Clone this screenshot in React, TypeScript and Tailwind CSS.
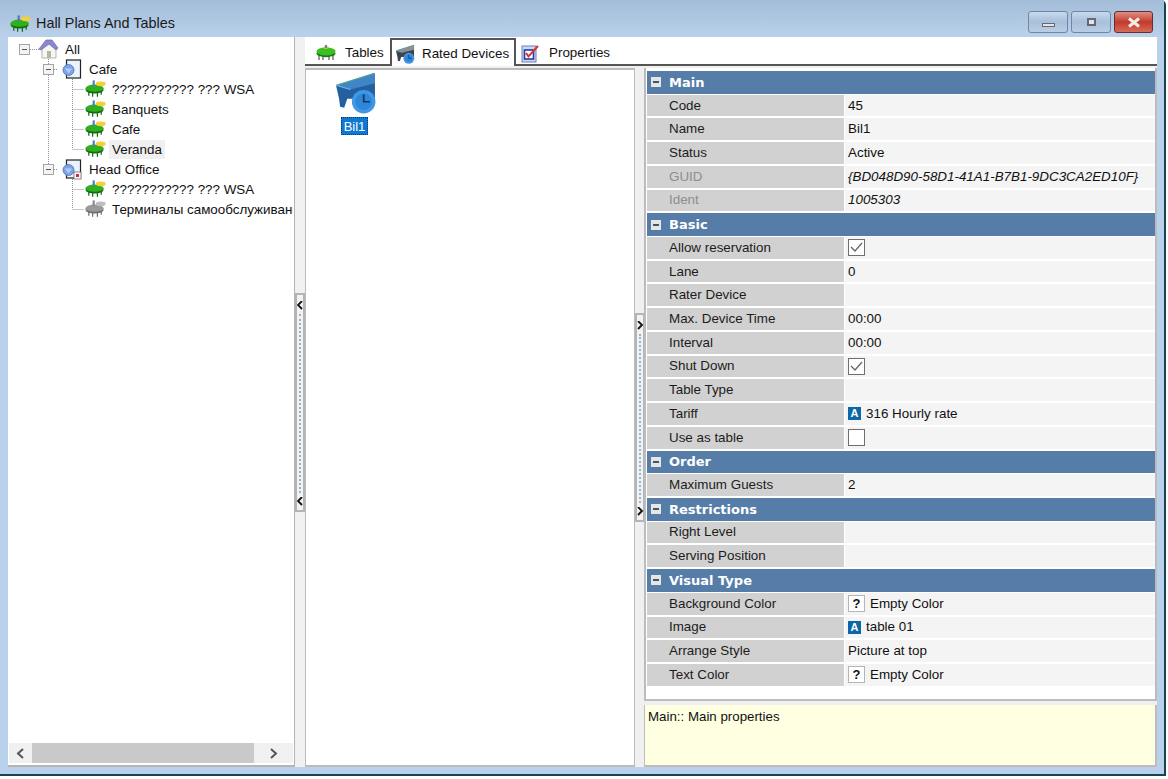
import React from "react";

function TableIcon({ gray = false }: { gray?: boolean }) {
  const top = gray ? "#9a9a9a" : "#2fb01f";
  const dark = gray ? "#6f6f6f" : "#146a12";
  const plate = gray ? "#bdbdbd" : "#f4cf3a";
  return (
    <svg width="21" height="18" viewBox="0 0 22 18" className="shrink-0">
      <path d="M4 10v6M8 11v6M13 11v6M17 10v5" stroke={dark} strokeWidth="1.3" />
      <ellipse cx="10" cy="10" rx="9.5" ry="3.6" fill={dark} />
      <ellipse cx="10" cy="8.2" rx="9.5" ry="3.8" fill={top} />
      <ellipse cx="16.5" cy="3.6" rx="5.2" ry="2.4" fill={plate} />
      <rect x="8" y="0" width="2.2" height="6" fill={gray ? "#8a8a8a" : "#4d78c0"} />
    </svg>
  );
}

function HouseIcon() {
  return (
    <svg width="22" height="20" viewBox="0 0 22 20" className="shrink-0">
      <path d="M4 9l7-5 7 5v10H4z" fill="#f7f6ef" stroke="#a3a3a3" strokeWidth=".8" />
      <path d="M1 10 8 1h6l6 8-2 2-7-6-8 6z" fill="#8a87d2" stroke="#6a67a5" strokeWidth=".7" />
      <rect x="9" y="12" width="4" height="7" fill="#b9b4a8" />
    </svg>
  );
}

function BranchIcon({ mark = false }: { mark?: boolean }) {
  return (
    <svg width="20" height="21" viewBox="0 0 20 21" className="shrink-0">
      <rect x="4.5" y="1" width="14" height="18" fill="#eaf3fb" stroke="#222" strokeWidth="1.2" />
      <circle cx="6.5" cy="11" r="5.5" fill="#7ea4e8" stroke="#4a6fbd" strokeWidth=".8" />
      <path d="M3 9.5h7l-3.5 5z" fill="#b5cdf5" />
      {mark && <rect x="12" y="13" width="7" height="7" fill="#fff" stroke="#555" strokeWidth=".7" />}
      {mark && <rect x="14" y="15" width="3" height="3" fill="#d02840" />}
    </svg>
  );
}

function Expander() {
  return (
    <span className="w-[11px] h-[11px] border border-[#a5a5a5] bg-[#f4f4f4] flex items-center justify-center shrink-0">
      <span className="w-[5px] h-px bg-[#555]" />
    </span>
  );
}

function TreeRow({ indent, label, icon, exp, hl }: { indent: string; label: string; icon: React.ReactNode; exp?: boolean; hl?: boolean }) {
  return (
    <div className={`h-5 flex items-center whitespace-nowrap ${indent}`}>
      {exp ? <span className="w-[19px] flex"><Expander /></span> : <span className="w-0" />}
      <span className="w-[24px] flex shrink-0">{icon}</span>
      <span className={`pl-[3px] pr-[3px] h-[19px] leading-[19px] ${hl ? "bg-[#f0f0f0]" : ""}`}>{label}</span>
    </div>
  );
}

function TreeLines() {
  const dash = { stroke: "#8f8f8f", strokeDasharray: "1 1" };
  return (
    <svg className="absolute left-0 top-0" width="100" height="190">
      <path d="M22 12.5h9M40.5 22v110" {...dash} fill="none" />
      <path d="M64.5 42v70M64.5 52.5h12M64.5 72.5h12M64.5 92.5h12M64.5 112.5h12M64.5 142v30M64.5 152.5h12M64.5 172.5h12M46 32.5h3M46 132.5h3" {...dash} fill="none" />
    </svg>
  );
}

function Splitter({ dir }: { dir: "l" | "r" }) {
  const ch = dir === "l" ? "M5 0 1 4l4 4" : "M1 0l4 4-4 4";
  const arrow = (
    <svg width="7" height="9" viewBox="0 0 7 9"><path d={ch} fill="none" stroke="#111" strokeWidth="1.8" /></svg>
  );
  return (
    <div className="w-[10px] flex items-center justify-center shrink-0">
      <div className={`w-[10px] border-2 border-[#b4b4b4] bg-[#f2f2f2] flex flex-col items-center justify-between pt-[6px] pb-[4px] ${dir === "l" ? "h-[219px]" : "h-[209px]"}`}>
        {arrow}
        <div className="flex-1 border-l-2 border-dotted border-[#8db4da] my-1" />
        {arrow}
      </div>
    </div>
  );
}

function TabTablesIcon() {
  return <svg width="20" height="16" viewBox="0 0 20 16" className="shrink-0"><path d="M3 9v6M7 10v5M13 10v5M17 9v6" stroke="#444" strokeWidth="1.1" /><ellipse cx="10" cy="8.4" rx="9.5" ry="3.8" fill="#137a12" /><ellipse cx="10" cy="6.4" rx="9.5" ry="4" fill="#3cc020" /><ellipse cx="10" cy="2.6" rx="3" ry="1.3" fill="#d6c04a" /><rect x="9" y="0" width="2" height="3" fill="#5f7fb5" /></svg>;
}

function DeviceIcon({ size, dark = false }: { size: number; dark?: boolean }) {
  const body = dark ? "#3f444c" : "#24609f";
  const top = dark ? "#8a8f98" : "#3f86c8";
  return (
    <svg width={size} height={size} viewBox="0 0 40 40" className="shrink-0">
      <path d="M0 12 38 0v26l-10 2-8-3-9 0-3 9-4-1-1-8z" fill={body} />
      <path d="M0 12 38 0v10L14 16z" fill={top} />
      <path d="M0 12 38 0" stroke="#5fae8c" strokeWidth="1" />
      <path d="M0 12l14 4" stroke="#7ab6e2" strokeWidth="1" />
      <circle cx="27" cy="28" r="11.5" fill="#3f97e6" />
      <circle cx="27" cy="28" r="8" fill="#2f86d6" />
      <path d="M27 21v7h6" stroke="#0f3560" strokeWidth="1.6" fill="none" />
    </svg>
  );
}

function PropsIcon() {
  return <svg width="18" height="19" viewBox="0 0 18 19" className="shrink-0"><rect x="1" y="2" width="14" height="16" fill="#cfd6ef" stroke="#6f7fc0" /><rect x="3.5" y="6" width="9" height="9" fill="#fff" stroke="#1c3fa8" strokeWidth="1.6" /><path d="M5 9l2.5 3.5L17 2" fill="none" stroke="#d8322a" strokeWidth="2" /></svg>;
}

function AIcon() {
  return <span className="w-[13px] h-[13px] bg-[#0d66a8] text-white text-[11px] leading-[13px] text-center font-bold shrink-0 mr-[5px]">A</span>;
}
function QIcon() {
  return <span className="w-[17px] h-[17px] border border-[#b5b5b5] bg-white text-[#111] text-[13px] leading-[15px] text-center font-bold shrink-0 mr-[5px]">?</span>;
}
function Check({ on }: { on: boolean }) {
  return (
    <span className="w-[17px] h-[17px] border border-[#6f6f6f] bg-white shrink-0 flex items-center justify-center">
      {on && <svg width="13" height="11" viewBox="0 0 13 11"><path d="M1 5l4 4 7-8" fill="none" stroke="#666" strokeWidth="1.3" /></svg>}
    </span>
  );
}

type Row = { h?: string; l?: string; v?: React.ReactNode; dim?: boolean };
const rows: Row[] = [
  { h: "Main" },
  { l: "Code", v: "45" },
  { l: "Name", v: "Bil1" },
  { l: "Status", v: "Active" },
  { l: "GUID", v: <i className="whitespace-nowrap">{"{BD048D90-58D1-41A1-B7B1-9DC3CA2ED10F}"}</i>, dim: true },
  { l: "Ident", v: <i>1005303</i>, dim: true },
  { h: "Basic" },
  { l: "Allow reservation", v: <Check on /> },
  { l: "Lane", v: "0" },
  { l: "Rater Device" },
  { l: "Max. Device Time", v: "00:00" },
  { l: "Interval", v: "00:00" },
  { l: "Shut Down", v: <Check on /> },
  { l: "Table Type" },
  { l: "Tariff", v: <><AIcon />316 Hourly rate</> },
  { l: "Use as table", v: <Check on={false} /> },
  { h: "Order" },
  { l: "Maximum Guests", v: "2" },
  { h: "Restrictions" },
  { l: "Right Level" },
  { l: "Serving Position" },
  { h: "Visual Type" },
  { l: "Background Color", v: <><QIcon />Empty Color</> },
  { l: "Image", v: <><AIcon />table 01</> },
  { l: "Arrange Style", v: "Picture at top" },
  { l: "Text Color", v: <><QIcon />Empty Color</> },
];

function GridRow({ r }: { r: Row }) {
  if (r.h) {
    return (
      <div className="h-[23.72px] pb-[1px] shrink-0">
        <div className="h-full bg-[#567ca8] flex items-center pl-[4px] text-white font-bold text-[13px]" style={{ fontFamily: '"DejaVu Sans", sans-serif' }}>
          <span className="w-[10px] h-[10px] bg-[#e6e6e6] flex items-center justify-center mr-[8px]"><span className="w-[6px] h-[2px] bg-[#456]" /></span>
          {r.h}
        </div>
      </div>
    );
  }
  return (
    <div className="h-[23.72px] pb-[2px] shrink-0 flex">
      <div className={`w-[197px] bg-[#d1d1d1] pl-[22px] flex items-center ${r.dim ? "text-[#8e8e8e]" : "text-[#1c1c1c]"}`}>{r.l}</div>
      <div className="flex-1 ml-px bg-[#f4f4f4] pl-[3px] flex items-center text-[#111]">{r.v}</div>
    </div>
  );
}

export default function App() {
  return (
    <div className="w-[1168px] h-[779px] bg-white overflow-hidden text-[13.4px] text-[#111]" style={{ fontFamily: '"Liberation Sans", Arial, sans-serif' }}>
      <div className="w-[1166px] h-[776px] border-r-2 border-b-2 border-[#17454f] bg-[#b9d1ea] flex flex-col rounded-tr-[5px]">
        <div className="h-[37px] shrink-0 flex items-start bg-gradient-to-b from-[#a3bcd8] to-[#b9d1ea] pl-[10px] pr-[11px]">
          <div className="flex items-center mt-[13px]">
            <TableIcon />
            <span className="ml-[5px] text-[14.4px] text-[#1a1a1a]">Hall Plans And Tables</span>
          </div>
          <div className="ml-auto flex gap-[3px] mt-[11px]">
            <div className="w-[40px] h-[22px] rounded-[3px] border border-[#6f87a3] bg-gradient-to-b from-[#c7d9ec] via-[#a8c0da] to-[#b9cee4] flex items-end justify-center pb-[5px]">
              <span className="w-[13px] h-[4px] bg-[#e4e4e4] border border-[#667]" />
            </div>
            <div className="w-[40px] h-[22px] rounded-[3px] border border-[#6f87a3] bg-gradient-to-b from-[#c7d9ec] via-[#a8c0da] to-[#b9cee4] flex items-center justify-center">
              <span className="w-[9px] h-[8px] bg-[#e4e4e4] border-2 border-[#667]" />
            </div>
            <div className="w-[39px] h-[22px] rounded-[3px] border border-[#6a2b33] bg-gradient-to-b from-[#dc8f80] via-[#c2392b] to-[#d66a58] flex items-center justify-center">
              <svg width="14" height="11" viewBox="0 0 14 11"><path d="M2 1.5l10 8M12 1.5l-10 8" stroke="#f3ebe6" strokeWidth="3" /></svg>
            </div>
          </div>
        </div>

        <div className="mx-[8px] h-[730px] w-[1149px] flex bg-[#f0f0f0]">
          <div className="w-[287px] shrink-0 bg-white border-b-2 border-r border-[#b4b4b4] flex flex-col relative">
            <TreeLines />
            <div className="flex-1 pt-[2px] relative">
              <TreeRow indent="pl-[11px]" exp label="All" icon={<HouseIcon />} />
              <TreeRow indent="pl-[35px]" exp label="Cafe" icon={<BranchIcon />} />
              <TreeRow indent="pl-[77px]" label="??????????? ??? WSA" icon={<TableIcon />} />
              <TreeRow indent="pl-[77px]" label="Banquets" icon={<TableIcon />} />
              <TreeRow indent="pl-[77px]" label="Cafe" icon={<TableIcon />} />
              <TreeRow indent="pl-[77px]" hl label="Veranda" icon={<TableIcon />} />
              <TreeRow indent="pl-[35px]" exp label="Head Office" icon={<BranchIcon mark />} />
              <TreeRow indent="pl-[77px]" label="??????????? ??? WSA" icon={<TableIcon />} />
              <div className="overflow-hidden w-[285px]">
                <TreeRow indent="pl-[77px]" label="Терминалы самообслуживания" icon={<TableIcon gray />} />
              </div>
            </div>
            <div className="h-[20px] mb-[2px] mx-[1px] bg-[#f0f0f0] flex items-center">
              <span className="w-[23px] flex justify-center"><svg width="9" height="11" viewBox="0 0 9 11"><path d="M7 1 2 5.5 7 10" fill="none" stroke="#555" strokeWidth="2" /></svg></span>
              <span className="w-[222px] h-full bg-[#c9c9c9]" />
              <span className="flex-1 flex justify-center"><svg width="9" height="11" viewBox="0 0 9 11"><path d="M2 1l5 4.5L2 10" fill="none" stroke="#555" strokeWidth="2" /></svg></span>
            </div>
          </div>

          <Splitter dir="l" />

          <div className="flex-1 flex flex-col min-w-0">
            <div className="h-[29px] shrink-0 bg-white border-b-2 border-[#555] flex items-end pl-[5px] relative">
              <div className="w-[80px] h-[27px] flex items-center gap-[9px] pl-[6px] pt-[5px] whitespace-nowrap"><TabTablesIcon /><span>Tables</span></div>
              <div className="w-[126px] h-[28px] -mb-[2px] bg-white border-2 border-b-0 border-[#555] flex items-center gap-[7px] pl-[4px] pt-[3px] whitespace-nowrap"><DeviceIcon size={19} dark /><span>Rated Devices</span></div>
              <div className="h-[27px] flex items-center gap-[10px] pl-[5px] pt-[5px] whitespace-nowrap"><PropsIcon /><span>Properties</span></div>
            </div>
            <div className="flex-1 flex pt-[2px] min-h-0">
              <div className="w-[330px] shrink-0 bg-white border-l border-t-2 border-r border-b-2 border-[#bcbcbc] pt-[3px] pl-[30px]">
                <div className="w-[40px] flex flex-col items-center">
                  <DeviceIcon size={41} />
                  <span className="mt-[3px] h-[18px] px-[2px] leading-[18px] bg-[#0f78d2] text-white border border-dotted border-[#0a3c78] text-[13px] -ml-[3px]">Bil1</span>
                </div>
              </div>
              <Splitter dir="r" />
              <div className="flex-1 flex flex-col min-w-0">
                <div className="h-[633px] shrink-0 bg-white border-2 border-l-2 border-t-0 border-[#bcbcbc] pl-px pt-[3px] -ml-px flex flex-col">
                  {rows.map((r, i) => <GridRow key={i} r={r} />)}
                </div>
                <div className="mt-[4px] flex-1 bg-[#ffffe1] border-l border-r-2 border-b-2 border-[#bcbcbc] -ml-px pl-[3px] pt-[2px] text-[13.3px]">Main:: Main properties</div>
              </div>
              <div className="w-0" />
            </div>
          </div>
        </div>
      </div>
    </div>
  );
}
